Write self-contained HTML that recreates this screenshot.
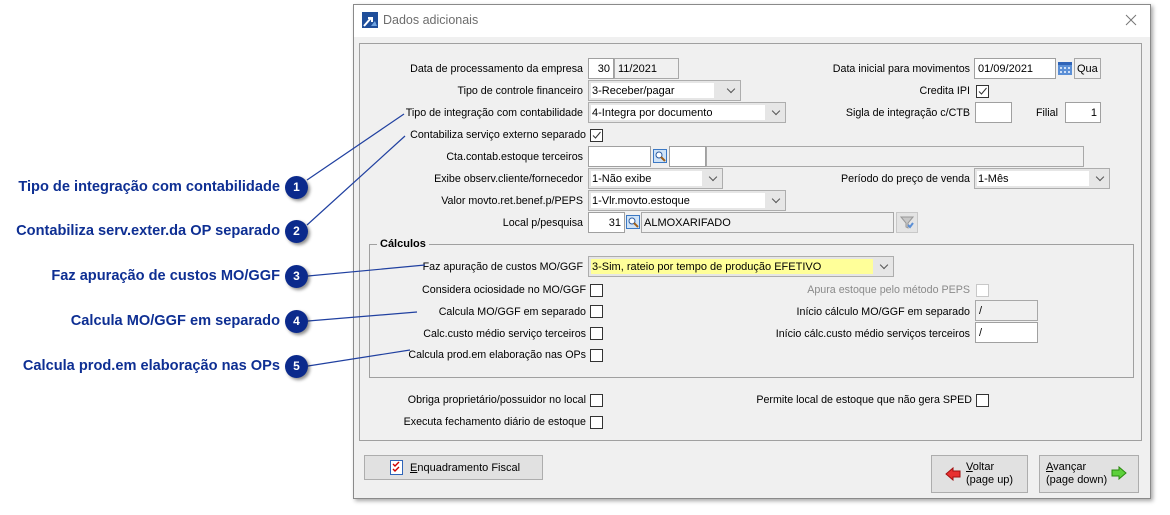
<!DOCTYPE html>
<html><head><meta charset="utf-8">
<style>
*{box-sizing:border-box;margin:0;padding:0}
body{width:1170px;height:515px;background:#fff;position:relative;overflow:hidden;font-family:"Liberation Sans",sans-serif;font-size:11px;color:#000}
.a{position:absolute}
.l{position:absolute;white-space:nowrap;text-align:right;line-height:14px;font-size:10.7px}
.in{position:absolute;background:#fff;border:1px solid #a0a0a0;height:21px;line-height:19px;padding:1px 3px 0;white-space:nowrap}
.gr{position:absolute;background:#f0f0f0;border:1px solid #a8a8a8;height:21px;line-height:19px;padding:1px 3px 0;white-space:nowrap}
.sel{position:absolute;background:#e6e6e6;border:1px solid #adadad;height:21px}
.sel span{position:absolute;left:2px;top:2px;bottom:2px;background:#fff;line-height:16px;padding-left:1px;white-space:nowrap}
.sel i{position:absolute;right:6px;top:5px;width:6px;height:6px;border-right:1px solid #555;border-bottom:1px solid #555;transform:rotate(45deg)}
.cb{position:absolute;width:13px;height:13px;border:1px solid #333;background:#fff}
.ann{position:absolute;right:890px;font-weight:bold;font-size:14.6px;color:#0e2f93;white-space:nowrap;line-height:16px}
.num{position:absolute;left:285px;width:23px;height:23px;border-radius:50%;background:#0b2a8c;color:#fff;font-weight:bold;font-size:12px;text-align:center;line-height:23px;box-shadow:2px 2px 3px rgba(0,0,0,.45)}
.btn{position:absolute;background:#e1e1e1;border:1px solid #adadad}
</style></head><body>
<div class="a" style="left:353px;top:4px;width:798px;height:495px;background:#f0f0f0;border:1px solid #8a8a8a;box-shadow:2px 2px 4px rgba(0,0,0,.35)"></div>
<div class="a" style="left:354px;top:5px;width:796px;height:32px;background:#fff"></div>
<svg class="a" style="left:362px;top:12px" width="16" height="16"><rect width="16" height="16" fill="#1f4e9a"/><path d="M2 14 L9 6 M6 6 H10 V10" stroke="#fff" stroke-width="2" fill="none"/><path d="M9 14 L13 9 L15 14Z" fill="#6fa3e0"/></svg>
<div class="a" style="left:383px;top:13px;font-size:12.5px;color:#6d6d6d">Dados adicionais</div>
<svg class="a" style="left:1125px;top:14px" width="12" height="12"><path d="M1 1L11 11M11 1L1 11" stroke="#777" stroke-width="1"/></svg>
<div class="a" style="left:359px;top:43px;width:783px;height:398px;border:1px solid #a0a0a0"></div>

<div class="l" style="right:587px;top:62px">Data de processamento da empresa</div>
<div class="in" style="left:588px;top:58px;width:26px;text-align:right">30</div>
<div class="gr" style="left:614px;top:58px;width:65px">11/2021</div>
<div class="l" style="right:200px;top:62px">Data inicial para movimentos</div>
<div class="in" style="left:974px;top:58px;width:82px">01/09/2021</div>
<svg class="a" style="left:1058px;top:61px" width="14" height="14"><rect x="0" y="1" width="14" height="13" fill="#5b8fd6"/><rect x="0" y="1" width="14" height="3" fill="#2f64b8"/><g fill="#cfe0f7"><rect x="2" y="6" width="2" height="2"/><rect x="6" y="6" width="2" height="2"/><rect x="10" y="6" width="2" height="2"/><rect x="2" y="10" width="2" height="2"/><rect x="6" y="10" width="2" height="2"/><rect x="10" y="10" width="2" height="2"/></g></svg>
<div class="gr" style="left:1074px;top:58px;width:27px;padding:1px 2px 0">Qua</div>

<div class="l" style="right:587px;top:84px">Tipo de controle financeiro</div>
<div class="sel" style="left:588px;top:80px;width:153px"><span style="right:26px">3-Receber/pagar</span><i></i></div>
<div class="l" style="right:200px;top:84px">Credita IPI</div>
<div class="cb" style="left:976px;top:85px"><svg width="11" height="11" style="position:absolute;left:0;top:0"><path d="M2 5.5L4.5 8L9.5 2" stroke="#333" fill="none"/></svg></div>

<div class="l" style="right:587px;top:106px">Tipo de integração com contabilidade</div>
<div class="sel" style="left:588px;top:102px;width:198px"><span style="right:20px">4-Integra por documento</span><i></i></div>
<div class="l" style="right:200px;top:106px">Sigla de integração c/CTB</div>
<div class="in" style="left:975px;top:102px;width:37px"></div>
<div class="l" style="right:112px;top:106px">Filial</div>
<div class="in" style="left:1065px;top:102px;width:36px;text-align:right">1</div>

<div class="l" style="right:584px;top:128px">Contabiliza serviço externo separado</div>
<div class="cb" style="left:590px;top:129px"><svg width="11" height="11" style="position:absolute;left:0;top:0"><path d="M2 5.5L4.5 8L9.5 2" stroke="#333" fill="none"/></svg></div>

<div class="l" style="right:587px;top:150px">Cta.contab.estoque terceiros</div>
<div class="in" style="left:588px;top:146px;width:63px"></div>
<svg class="a" style="left:653px;top:149px" width="14" height="14"><rect x=".5" y=".5" width="13" height="13" fill="#cfe3f7" stroke="#3b78c4"/><circle cx="6" cy="6" r="3" fill="#fff" stroke="#2a5aa0"/><path d="M8 8L12 12" stroke="#a0601a" stroke-width="2"/></svg>
<div class="in" style="left:669px;top:146px;width:37px"></div>
<div class="gr" style="left:706px;top:146px;width:378px"></div>

<div class="l" style="right:587px;top:172px">Exibe observ.cliente/fornecedor</div>
<div class="sel" style="left:588px;top:168px;width:135px"><span style="right:20px">1-Não exibe</span><i></i></div>
<div class="l" style="right:200px;top:172px">Período do preço de venda</div>
<div class="sel" style="left:974px;top:168px;width:136px"><span style="right:20px">1-Mês</span><i></i></div>

<div class="l" style="right:587px;top:194px">Valor movto.ret.benef.p/PEPS</div>
<div class="sel" style="left:588px;top:190px;width:198px"><span style="right:20px">1-Vlr.movto.estoque</span><i></i></div>

<div class="l" style="right:587px;top:216px">Local p/pesquisa</div>
<div class="in" style="left:588px;top:212px;width:37px;text-align:right">31</div>
<svg class="a" style="left:626px;top:215px" width="14" height="14"><rect x=".5" y=".5" width="13" height="13" fill="#cfe3f7" stroke="#3b78c4"/><circle cx="6" cy="6" r="3" fill="#fff" stroke="#2a5aa0"/><path d="M8 8L12 12" stroke="#a0601a" stroke-width="2"/></svg>
<div class="gr" style="left:641px;top:212px;width:253px;padding-left:2px">ALMOXARIFADO</div>
<div class="a" style="left:896px;top:212px;width:22px;height:21px;background:#e4e4e4;border:1px solid #c8c8c8"></div>
<svg class="a" style="left:900px;top:215px" width="14" height="14"><path d="M1 2H13L8 8V13L6 12V8Z" fill="#c8c8c8" stroke="#999"/><path d="M8 10L10 12L13 8" stroke="#5b8fd6" stroke-width="2" fill="none"/></svg>

<div class="a" style="left:369px;top:244px;width:765px;height:134px;border:1px solid #a0a0a0"></div>
<div class="a" style="left:377px;top:237px;background:#f0f0f0;padding:0 3px;font-weight:bold;line-height:14px">Cálculos</div>

<div class="l" style="right:587px;top:260px">Faz apuração de custos MO/GGF</div>
<div class="sel" style="left:588px;top:256px;width:306px"><span style="right:20px;background:#ffff99">3-Sim, rateio por tempo de produção EFETIVO</span><i></i></div>

<div class="l" style="right:584px;top:283px">Considera ociosidade no MO/GGF</div>
<div class="cb" style="left:590px;top:284px"></div>
<div class="l" style="right:200px;top:283px;color:#8a8a8a">Apura estoque pelo método PEPS</div>
<div class="cb" style="left:976px;top:284px;border-color:#c8c8c8"></div>

<div class="l" style="right:584px;top:305px">Calcula MO/GGF em separado</div>
<div class="cb" style="left:590px;top:305px"></div>
<div class="l" style="right:200px;top:305px">Início cálculo MO/GGF em separado</div>
<div class="gr" style="left:975px;top:300px;width:63px">/</div>

<div class="l" style="right:584px;top:327px">Calc.custo médio serviço terceiros</div>
<div class="cb" style="left:590px;top:327px"></div>
<div class="l" style="right:200px;top:327px">Início cálc.custo médio serviços terceiros</div>
<div class="in" style="left:975px;top:322px;width:63px">/</div>

<div class="l" style="right:584px;top:348px">Calcula prod.em elaboração nas OPs</div>
<div class="cb" style="left:590px;top:349px"></div>

<div class="l" style="right:584px;top:393px">Obriga proprietário/possuidor no local</div>
<div class="cb" style="left:590px;top:394px"></div>
<div class="l" style="right:198px;top:393px">Permite local de estoque que não gera SPED</div>
<div class="cb" style="left:976px;top:394px"></div>
<div class="l" style="right:584px;top:415px">Executa fechamento diário de estoque</div>
<div class="cb" style="left:590px;top:416px"></div>

<div class="btn" style="left:364px;top:455px;width:179px;height:25px"></div>
<svg class="a" style="left:390px;top:459px" width="13" height="16"><rect x=".5" y="1.5" width="12" height="14" fill="#fff" stroke="#2f64b8"/><path d="M3 5L5 7L9 3M3 10L5 12L9 8" stroke="#c00" fill="none" stroke-width="1.4"/></svg>
<div class="a" style="left:410px;top:461px;line-height:14px"><u>E</u>nquadramento Fiscal</div>

<div class="btn" style="left:931px;top:455px;width:97px;height:38px"></div>
<svg class="a" style="left:945px;top:467px" width="16" height="14"><path d="M1 7L8 1V4H15V10H8V13Z" fill="#e83030" stroke="#a01010"/></svg>
<div class="a" style="left:966px;top:461px;line-height:13px"><u>V</u>oltar<br>(page up)</div>

<div class="btn" style="left:1039px;top:455px;width:100px;height:38px"></div>
<div class="a" style="left:1046px;top:461px;line-height:13px"><u>A</u>vançar<br>(page down)</div>
<svg class="a" style="left:1111px;top:466px" width="16" height="14"><path d="M15 7L8 1V4H1V10H8V13Z" fill="#5cd03a" stroke="#2a8a10"/></svg>

<div class="ann" style="top:179px">Tipo de integração com contabilidade</div>
<div class="ann" style="top:223px">Contabiliza serv.exter.da OP separado</div>
<div class="ann" style="top:268px">Faz apuração de custos MO/GGF</div>
<div class="ann" style="top:313px">Calcula MO/GGF em separado</div>
<div class="ann" style="top:358px">Calcula prod.em elaboração nas OPs</div>
<svg class="a" style="left:0;top:0" width="1170" height="515">
<g stroke="#2040a0" stroke-width="1.2" fill="none">
<path d="M307 180L404 114"/><path d="M307 225L405 136"/><path d="M308 276L425 265"/><path d="M308 321L417 312"/><path d="M308 366L410 350"/>
</g></svg>
<div class="num" style="top:176px">1</div>
<div class="num" style="top:220px">2</div>
<div class="num" style="top:265px">3</div>
<div class="num" style="top:310px">4</div>
<div class="num" style="top:355px">5</div>
</body></html>
